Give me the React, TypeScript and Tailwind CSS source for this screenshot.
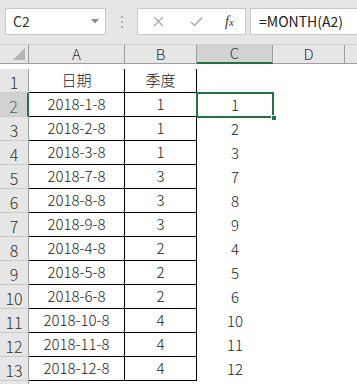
import React from "react";

const rows: [string, string, string][] = [
  ["2018-1-8", "1", "1"],
  ["2018-2-8", "1", "2"],
  ["2018-3-8", "1", "3"],
  ["2018-7-8", "3", "7"],
  ["2018-8-8", "3", "8"],
  ["2018-9-8", "3", "9"],
  ["2018-4-8", "2", "4"],
  ["2018-5-8", "2", "5"],
  ["2018-6-8", "2", "6"],
  ["2018-10-8", "4", "10"],
  ["2018-11-8", "4", "11"],
  ["2018-12-8", "4", "12"],
];

const font = { fontFamily: '"Noto Sans CJK SC", "Noto Sans", sans-serif' };

const App = () => {
  return (
    <main
      className="w-[357px] h-[384px] overflow-hidden bg-white text-[#222] select-none"
      style={font}
    >
      {/* formula bar */}
      <div className="h-[45px] bg-[#e6e6e6] border-b border-[#d0d0d0] flex items-start pt-[8px]">
        <div className="ml-[5px] w-[101px] h-[27px] bg-white border border-[#c8c8c8] flex items-center pl-[7px] pr-[6px] text-[14px] text-[#333]">
          <span className="flex-1">C2</span>
          <svg width="8" height="5" viewBox="0 0 8 5">
            <path d="M0 0 L8 0 L4 4.5 Z" fill="#8a8a8a" />
          </svg>
        </div>
        <div className="w-[31px] h-[27px] flex flex-col items-center justify-center gap-[3px]">
          <span className="w-[2px] h-[2px] bg-[#b0b0b0]" />
          <span className="w-[2px] h-[2px] bg-[#b0b0b0]" />
          <span className="w-[2px] h-[2px] bg-[#b0b0b0]" />
        </div>
        <div className="w-[109px] h-[27px] bg-white border border-[#c8c8c8] flex items-center">
          <svg className="ml-[15px]" width="11" height="11" viewBox="0 0 11 11">
            <path d="M1 1 L10 10 M10 1 L1 10" stroke="#a8a8a8" strokeWidth="1.3" />
          </svg>
          <svg className="ml-[26px]" width="13" height="11" viewBox="0 0 13 11">
            <path d="M1 6 L4.5 9.5 L12 1.5" stroke="#a8a8a8" strokeWidth="1.4" fill="none" />
          </svg>
          <span
            className="ml-[22px] text-[14px] italic text-[#333]"
            style={{ fontFamily: '"Liberation Serif", serif' }}
          >
            f<span className="text-[11px]">x</span>
          </span>
        </div>
        <div className="ml-[4px] flex-1 h-[27px] bg-white border border-[#c8c8c8] border-r-0 flex items-center pl-[8px] text-[14px] text-[#222]">
          =MONTH(A2)
        </div>
      </div>

      {/* sheet */}
      <div className="grid grid-cols-[29px_96px_72px_76px_72px_1fr] auto-rows-[24px] text-[15px] font-light">
        {/* column headers */}
        <div className="h-[19px] bg-[#e6e6e6] border-r border-b border-[#9e9e9e] relative">
          <svg className="absolute right-[3px] bottom-[3px]" width="12" height="12" viewBox="0 0 12 12">
            <path d="M12 0 L12 12 L0 12 Z" fill="#b4b4b4" />
          </svg>
        </div>
        {["A", "B"].map((c) => (
          <div
            key={c}
            className="h-[19px] bg-[#e6e6e6] border-r border-b border-[#9e9e9e] flex items-center justify-center text-[15px] text-[#333]"
          >
            {c}
          </div>
        ))}
        <div className="h-[19px] bg-[#d2d2d2] border-r border-[#9e9e9e] border-b-2 border-b-[#217346] flex items-center justify-center text-[15px] text-[#333]">
          C
        </div>
        <div className="h-[19px] bg-[#e6e6e6] border-r border-b border-[#9e9e9e] flex items-center justify-center text-[15px] text-[#333]">
          D
        </div>
        <div className="h-[19px] bg-[#e6e6e6] border-b border-[#9e9e9e]" />

        {/* row 1 */}
        <div className="bg-[#e6e6e6] border-r border-b border-[#c9c9c9] border-r-[#9e9e9e] flex items-end justify-center leading-[20px] text-[16px] text-[#333]">
          1
        </div>
        <div className="border-r border-b border-black flex items-center justify-center">日期</div>
        <div className="border-r border-b border-black flex items-center justify-center">季度</div>
        <div />
        <div />
        <div />

        {rows.map(([a, b, c], i) => {
          const n = i + 2;
          const sel = n === 2;
          return (
            <React.Fragment key={n}>
              <div
                className={
                  sel
                    ? "bg-[#d2d2d2] border-b border-[#c9c9c9] border-r-2 border-r-[#217346] flex items-end justify-center leading-[20px] text-[16px] text-[#4a6b58]"
                    : "bg-[#e6e6e6] border-b border-[#c9c9c9] border-r border-r-[#9e9e9e] flex items-end justify-center leading-[20px] text-[16px] text-[#333]"
                }
              >
                {n}
              </div>
              <div className="border-r border-b border-black flex items-center justify-center">{a}</div>
              <div className="border-r border-b border-black flex items-center justify-center">{b}</div>
              <div className="relative flex items-center justify-center">
                {c}
                {sel && (
                  <>
                    <div className="absolute -left-px -top-px -right-px -bottom-px border-2 border-[#217346]" />
                    <div className="absolute -right-[4px] -bottom-[4px] w-[6px] h-[6px] bg-[#217346] border border-white" />
                  </>
                )}
              </div>
              <div />
              <div />
            </React.Fragment>
          );
        })}

        {/* row 14, cut off by the window */}
        <div className="bg-[#e6e6e6] border-r border-[#9e9e9e]" />
      </div>
    </main>
  );
};

export default App;
